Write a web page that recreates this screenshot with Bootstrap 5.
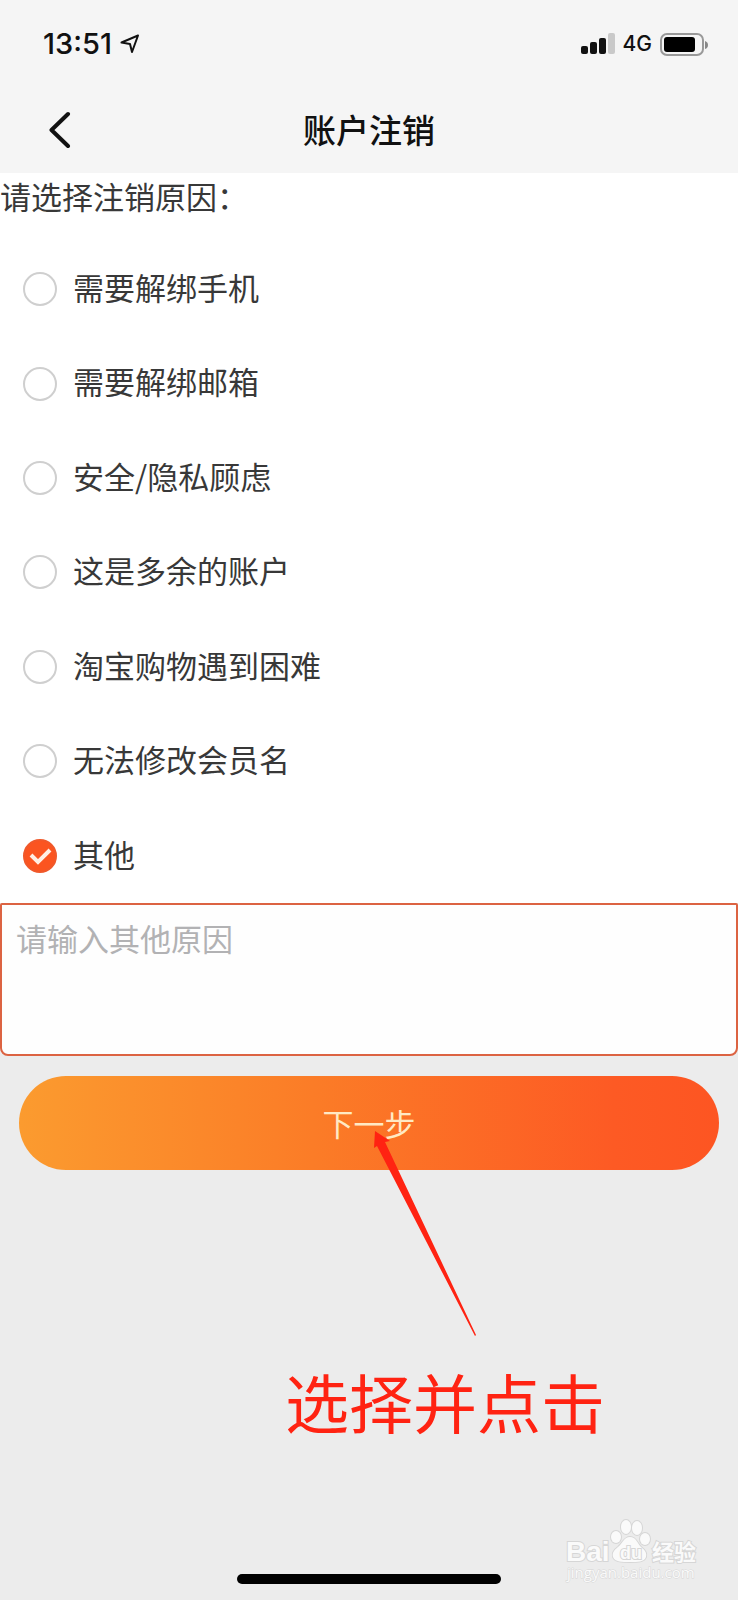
<!DOCTYPE html>
<html lang="zh-CN">
<head>
<meta charset="utf-8">
<meta name="viewport" content="width=device-width, initial-scale=1">
<title>账户注销</title>
<link href="https://cdn.jsdelivr.net/npm/bootstrap@5.3.0/dist/css/bootstrap.min.css" rel="stylesheet">
<style>
  body { font-family: "Noto Sans CJK SC", sans-serif; font-size: 31px; background: #ececec; color: #383838; }
  .top-area { background: #f5f5f5; color: #111; }
  .status-bar { height: 88px; padding: 0 30px 0 43px; font-family: Inter, sans-serif; }
  .clock { font-size: 29px; font-weight: 500; line-height: 32px; }
  .net-type { font-size: 21px; font-weight: 500; line-height: 24px; }
  .title-bar { display: grid; grid-template-columns: 80px 1fr 80px; height: 85px; align-items: center; padding-bottom: 2px; }
  .title-bar h1 { font-size: 33px; font-weight: 500; line-height: 40px; padding-bottom: 2px; }
  .back-btn { padding-left: 49px; border: 0; background: none; line-height: 1; color: inherit; }
  .prompt { font-size: inherit; line-height: 46px; height: 69px; }
  .reasons { display: grid; grid-auto-rows: 1fr; min-height: 661px; }
  .reason { gap: 16px; padding-left: 23px; }
  .reason span { padding-bottom: 4px; }
  .reason .form-check-input { width: 34px; height: 34px; border: 2px solid #cfcfcf; background-size: 100%; }
  .reason .form-check-input:checked {
    background-color: #fb5420; border-color: #f0582a;
    background-origin: border-box;
    background-image: url("data:image/svg+xml,%3Csvg xmlns='http://www.w3.org/2000/svg' viewBox='0 0 34 34'%3E%3Cpath d='M8 16l7 7L27 11' fill='none' stroke='%23ffeee4' stroke-width='4'/%3E%3C/svg%3E");
  }
  .other-text { height: 153px; padding: 10px 14px; border: 2px solid #dc6342; border-radius: 2px 2px 8px 8px; font-size: 31px; line-height: 46px; resize: none; background: #fefefe; }
  .other-text::placeholder { color: #b2b2b4; opacity: 1; }
  .next-area { padding: 20px 19px; }
  .next-btn { height: 94px; font-size: 31px; color: #ffe9c4; border: 0; background: linear-gradient(90deg, #fb9b2f, #fb7c27 42%, #fd5a24 85%, #fd5522); }
  .next-btn:hover { color: #ffe9c4; }
  .note { top: 73px; left: 50%; margin-left: -84px; color: #ff2312; font-size: 64px; line-height: 80px; }
  .note svg { margin: 0 0 23px 87px; }
  .home-bar { width: 264px; height: 10px; margin-bottom: 16px; background: #000; }
  .watermark { right: 34px; bottom: 10px; }
</style>
</head>
<body>
<div class="min-vh-100 d-flex flex-column position-relative">
  <header class="top-area">
    <div class="status-bar d-flex align-items-center justify-content-between">
      <div class="d-flex align-items-center gap-2">
        <span class="clock">13:51</span>
        <svg width="20" height="20" viewBox="0 0 20 20" fill="none" stroke="#111" stroke-width="2" stroke-linejoin="round"><path d="M18 1.500 1.500 8.500 10 10l2 8z"/></svg>
      </div>
      <div class="d-flex align-items-center gap-2">
        <svg width="34" height="22" viewBox="0 0 34 22" fill="#111"><rect y="13" width="7" height="8" rx="2"/><rect x="9" y="9" width="7" height="12" rx="2"/><rect x="18" y="5" width="7" height="16" rx="2"/><rect x="27" width="7" height="21" rx="2" fill="#c9c9c9"/></svg>
        <span class="net-type">4G</span>
        <svg width="48" height="24" viewBox="0 0 48 24"><rect x="1" y="2" width="42" height="21" rx="6" fill="none" stroke="#999" stroke-width="2"/><rect x="4" y="5" width="31" height="15" rx="3"/><path d="M45 9q3 1 3 4t-3 4z" fill="#888"/></svg>
      </div>
    </div>
    <div class="title-bar text-center">
      <button type="button" class="back-btn text-start" aria-label="返回">
        <svg class="d-block" width="22" height="38" viewBox="0 0 22 38" fill="none" stroke="#111" stroke-width="4" stroke-linecap="round" stroke-linejoin="round"><path d="M19 3 2.500 19 19 35"/></svg>
      </button>
      <h1 class="m-0">账户注销</h1>
    </div>
  </header>

  <form class="m-0">
    <fieldset class="bg-white">
      <legend class="prompt m-0">请选择注销原因：</legend>
      <div class="reasons">
        <label class="reason d-flex align-items-center"><input class="form-check-input m-0" type="radio" name="reason"><span>需要解绑手机</span></label>
        <label class="reason d-flex align-items-center"><input class="form-check-input m-0" type="radio" name="reason"><span>需要解绑邮箱</span></label>
        <label class="reason d-flex align-items-center"><input class="form-check-input m-0" type="radio" name="reason"><span>安全/隐私顾虑</span></label>
        <label class="reason d-flex align-items-center"><input class="form-check-input m-0" type="radio" name="reason"><span>这是多余的账户</span></label>
        <label class="reason d-flex align-items-center"><input class="form-check-input m-0" type="radio" name="reason"><span>淘宝购物遇到困难</span></label>
        <label class="reason d-flex align-items-center"><input class="form-check-input m-0" type="radio" name="reason"><span>无法修改会员名</span></label>
        <label class="reason d-flex align-items-center"><input class="form-check-input m-0" type="radio" name="reason" checked><span>其他</span></label>
      </div>
    </fieldset>
    <textarea class="other-text form-control" placeholder="请输入其他原因" aria-label="请输入其他原因"></textarea>
    <div class="next-area position-relative">
      <button type="button" class="next-btn btn rounded-pill w-100">下一步</button>
      <div class="note position-absolute text-nowrap pe-none">
        <svg class="d-block" width="106" height="208" viewBox="0 0 106 208" fill="currentColor"><path d="M3 2 18 12 13 13 104 206 103 207 5 17 2 19z"/></svg>
        选择并点击
      </div>
    </div>
  </form>

  <div class="home-bar rounded-pill mt-auto mx-auto"></div>

  <svg class="watermark position-absolute" width="144" height="75" viewBox="0 0 144 75" fill="#fafafa" stroke="#d6d6d6" stroke-width="2" paint-order="stroke">
    <ellipse cx="56" cy="22" rx="5" ry="6"/><ellipse cx="66" cy="12" rx="5" ry="7"/><ellipse cx="77" cy="13" rx="5" ry="7"/><ellipse cx="85" cy="24" rx="5" ry="6"/>
    <path d="M70 22c6 0 7 6 11 10 4 3 6 6 5 10-2 5-8 5-16 5s-15 0-17-5c-1-4 1-7 5-10 5-4 6-10 12-10z"/>
    <text x="6" y="46" font-family="Liberation Sans, sans-serif" font-size="28" font-weight="700">Bai</text>
    <text x="60" y="44" font-family="Liberation Sans, sans-serif" font-size="18" font-weight="700">du</text>
    <text x="92" y="45" font-family="Noto Sans CJK SC, sans-serif" font-size="22" font-weight="700">经验</text>
    <text x="7" y="63" font-family="Open Sans, sans-serif" font-size="15" stroke-width="1">jingyan.baidu.com</text>
  </svg>
</div>
<script src="https://cdn.jsdelivr.net/npm/bootstrap@5.3.0/dist/js/bootstrap.bundle.min.js"></script>
</body>
</html>
